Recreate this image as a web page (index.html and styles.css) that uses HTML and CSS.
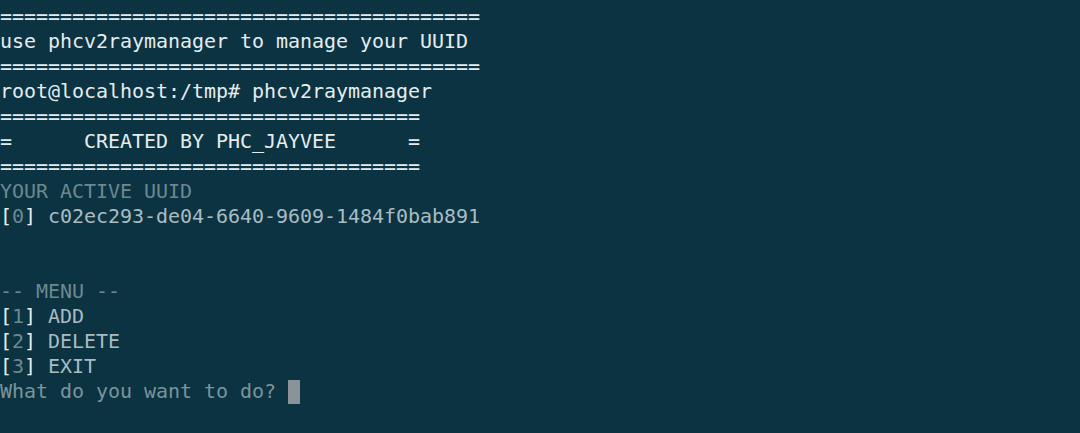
FILE: index.html
```html
<!DOCTYPE html>
<html>
<head>
<meta charset="utf-8">
<link rel="stylesheet" href="styles.css">
</head>
<body>
<div class="term">
<div class="line bright">========================================</div>
<div class="line bright">use phcv2raymanager to manage your UUID</div>
<div class="line bright">========================================</div>
<div class="line bright">root@localhost:/tmp# phcv2raymanager</div>
<div class="line bright">===================================</div>
<div class="line bright">=      CREATED BY PHC_JAYVEE      =</div>
<div class="line bright">===================================</div>
<div class="line dim">YOUR ACTIVE UUID</div>
<div class="line"><span class="br">[</span><span class="num">0</span><span class="br">]</span> <span class="item">c02ec293-de04-6640-9609-1484f0bab891</span></div>
<div class="line"> </div>
<div class="line"> </div>
<div class="line dim">-- MENU --</div>
<div class="line"><span class="br">[</span><span class="num">1</span><span class="br">]</span> <span class="item">ADD</span></div>
<div class="line"><span class="br">[</span><span class="num">2</span><span class="br">]</span> <span class="item">DELETE</span></div>
<div class="line"><span class="br">[</span><span class="num">3</span><span class="br">]</span> <span class="item">EXIT</span></div>
<div class="line prompt">What do you want to do? <span class="cursor"></span></div>
</div>
</body>
</html>
```
FILE: styles.css
```css
html, body {
  margin: 0;
  padding: 0;
  background: #0b3342;
  width: 1080px;
  height: 433px;
  overflow: hidden;
}
.term {
  padding-top: 4px;
  font-family: "DejaVu Sans Mono", "Liberation Mono", monospace;
  font-size: 20px;
  letter-spacing: -0.04px;
  line-height: 25px;
  color: #e4eaec;
}
.line {
  white-space: pre;
  height: 25px;
}
.bright { color: #e6ecee; }
.dim { color: #6d8891; }
.br { color: #e6ecee; }
.num { color: #6d8891; }
.item { color: #a9bcc2; }
.prompt { color: #7c949b; }
.cursor {
  display: inline-block;
  width: 12px;
  height: 24px;
  background: #8a9498;
  vertical-align: -6px;
}
```
